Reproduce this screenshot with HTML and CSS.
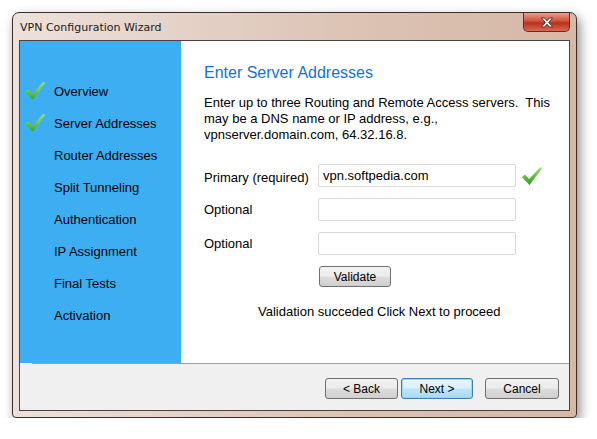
FILE: index.html
```html
<!DOCTYPE html>
<html lang="en">
<head>
  <meta charset="UTF-8" />
  <title>VPN Configuration Wizard</title>
  <link rel="stylesheet" href="styles.css">
</head>
<body>
  <div class="window">
    <div class="titlebar">
      <span class="title">VPN Configuration Wizard</span>
      <button class="close" aria-label="Close">
        <svg width="14" height="11" viewBox="0 0 14 11">
          <path d="M1.5 1 L4.5 1 L7 3.8 L9.5 1 L12.5 1 L8.6 5.5 L12.5 10 L9.5 10 L7 7.2 L4.5 10 L1.5 10 L5.4 5.5 Z" fill="#fff" stroke="#4a2a2a" stroke-width="0.9" stroke-linejoin="round"/>
        </svg>
      </button>
    </div>

    <div class="client">
      <div class="main">
        <ul class="steps">
          <li class="done"><span class="tick"></span>Overview</li>
          <li class="done"><span class="tick"></span>Server Addresses</li>
          <li><span class="tick"></span>Router Addresses</li>
          <li><span class="tick"></span>Split Tunneling</li>
          <li><span class="tick"></span>Authentication</li>
          <li><span class="tick"></span>IP Assignment</li>
          <li><span class="tick"></span>Final Tests</li>
          <li><span class="tick"></span>Activation</li>
        </ul>

        <div class="content">
          <h2>Enter Server Addresses</h2>
          <p class="intro">Enter up to three Routing and Remote Access servers.&nbsp; This may be a DNS name or IP address, e.g., vpnserver.domain.com, 64.32.16.8.</p>

          <div class="row">
            <label class="label-primary">Primary (required)</label>
            <input type="text" value="vpn.softpedia.com" />
            <svg class="ok" width="22" height="20" viewBox="0 0 22 20">
              <defs>
                <linearGradient id="g1" x1="0" y1="0" x2="0" y2="1">
                  <stop offset="0" stop-color="#9be36a"/>
                  <stop offset="1" stop-color="#2f9a1c"/>
                </linearGradient>
              </defs>
              <path d="M1 11 L4 8.5 L8 13 L19.5 1 L21 2.5 L8.5 19 Z" fill="url(#g1)"/>
            </svg>
          </div>
          <div class="row">
            <label>Optional</label>
            <input type="text" />
          </div>
          <div class="row row-last">
            <label>Optional</label>
            <input type="text" />
          </div>

          <button class="btn btn-validate">Validate</button>

          <p class="status">Validation succeded Click Next to proceed</p>
        </div>
      </div>

      <div class="footer">
        <button class="btn">&lt; Back</button>
        <button class="btn btn-default">Next &gt;</button>
        <button class="btn btn-cancel">Cancel</button>
      </div>
    </div>
  </div>
</body>
</html>
```

FILE: styles.css
```css
* {
  box-sizing: border-box;
}

body {
  margin: 0;
  background: #fff;
  font-family: "Liberation Sans", Arial, sans-serif;
  font-size: 13px;
  color: #000;
}

/* Fenêtre type Windows 7 */
.window {
  margin: 12px 0 0 12px;
  width: 565px;
  height: 406px;
  border: 1px solid #3b2f2c;
  border-radius: 7px 7px 4px 4px;
  background: linear-gradient(to right, #ece1db, #dcc3b4 60%, #d6b8a6);
  box-shadow: 3px 5px 12px rgba(0, 0, 0, 0.45);
  padding: 0 6px 6px 6px;
  display: flex;
  flex-direction: column;
}

.titlebar {
  height: 27px;
  display: flex;
  justify-content: space-between;
  align-items: flex-start;
}

.title {
  font-family: "DejaVu Sans", sans-serif;
  font-size: 11px;
  color: #1a1a1a;
  padding: 8px 0 0 1px;
}

.close {
  width: 47px;
  height: 19px;
  margin: 0;
  padding: 0;
  border: 1px solid #6e2a20;
  border-top: none;
  border-radius: 0 0 5px 5px;
  background: linear-gradient(#e8a08e, #d0503a 45%, #b8301c 55%, #d96a4e);
  display: flex;
  align-items: center;
  justify-content: center;
}

.client {
  flex: 1;
  border: 1px solid #4e4140;
  background: #f0f0f0;
  display: flex;
  flex-direction: column;
}

.main {
  height: 322px;
  display: flex;
  background: #fff;
}

.steps {
  width: 161px;
  margin: 0;
  padding: 34px 0 0 5px;
  list-style: none;
  background: #3daef2;
}

.steps li {
  height: 32px;
  display: flex;
  align-items: center;
}

.tick {
  width: 20px;
  height: 20px;
  margin-right: 9px;
}

.done .tick {
  background: linear-gradient(#a6ec72, #34a321);
  clip-path: polygon(0% 55%, 15% 43%, 38% 66%, 92% 2%, 100% 10%, 40% 95%);
}

.content {
  flex: 1;
  padding: 23px 0 0 23px;
}

h2 {
  margin: 0 0 13px 0;
  font-size: 16px;
  font-weight: normal;
  color: #1672d6;
}

.intro {
  margin: 0 0 21px 0;
  line-height: 16px;
  padding-right: 12px;
}

.row {
  display: flex;
  align-items: center;
  height: 23px;
  margin-bottom: 11px;
}

.row label {
  width: 114px;
}

.label-primary {
  padding-top: 4px;
}

.row input {
  width: 198px;
  height: 23px;
  border: 1px solid #d6d9de;
  border-radius: 2px;
  padding: 0 4px;
  font-family: inherit;
  font-size: 13px;
  color: #000;
}

.ok {
  margin-left: 5px;
}

.btn {
  width: 73px;
  height: 21px;
  padding: 0;
  border: 1px solid #707070;
  border-radius: 3px;
  background: linear-gradient(#f2f2f2, #ebebeb 49%, #dddddd 51%, #cfcfcf);
  font-family: "Liberation Sans", Arial, sans-serif;
  font-size: 12px;
  color: #000;
}

.btn-validate {
  width: 72px;
  margin: 0 0 0 115px;
  display: block;
}

.status {
  margin: 17px 0 0 54px;
}

.footer {
  flex: 1;
  border-top: 1px solid #a0a0a0;
  margin-left: 12px;
  padding: 14px 10px 0 0;
  display: flex;
  justify-content: flex-end;
  gap: 3px;
}

.btn-default {
  width: 72px;
  border-color: #3c7fb1;
  background: linear-gradient(#eaf6fd, #d9f0fc 49%, #bee6fd 51%, #a7d9f5);
  box-shadow: inset 0 0 0 1px #9ad6f6;
}

.btn-cancel {
  width: 74px;
  margin-left: 9px;
}
```
